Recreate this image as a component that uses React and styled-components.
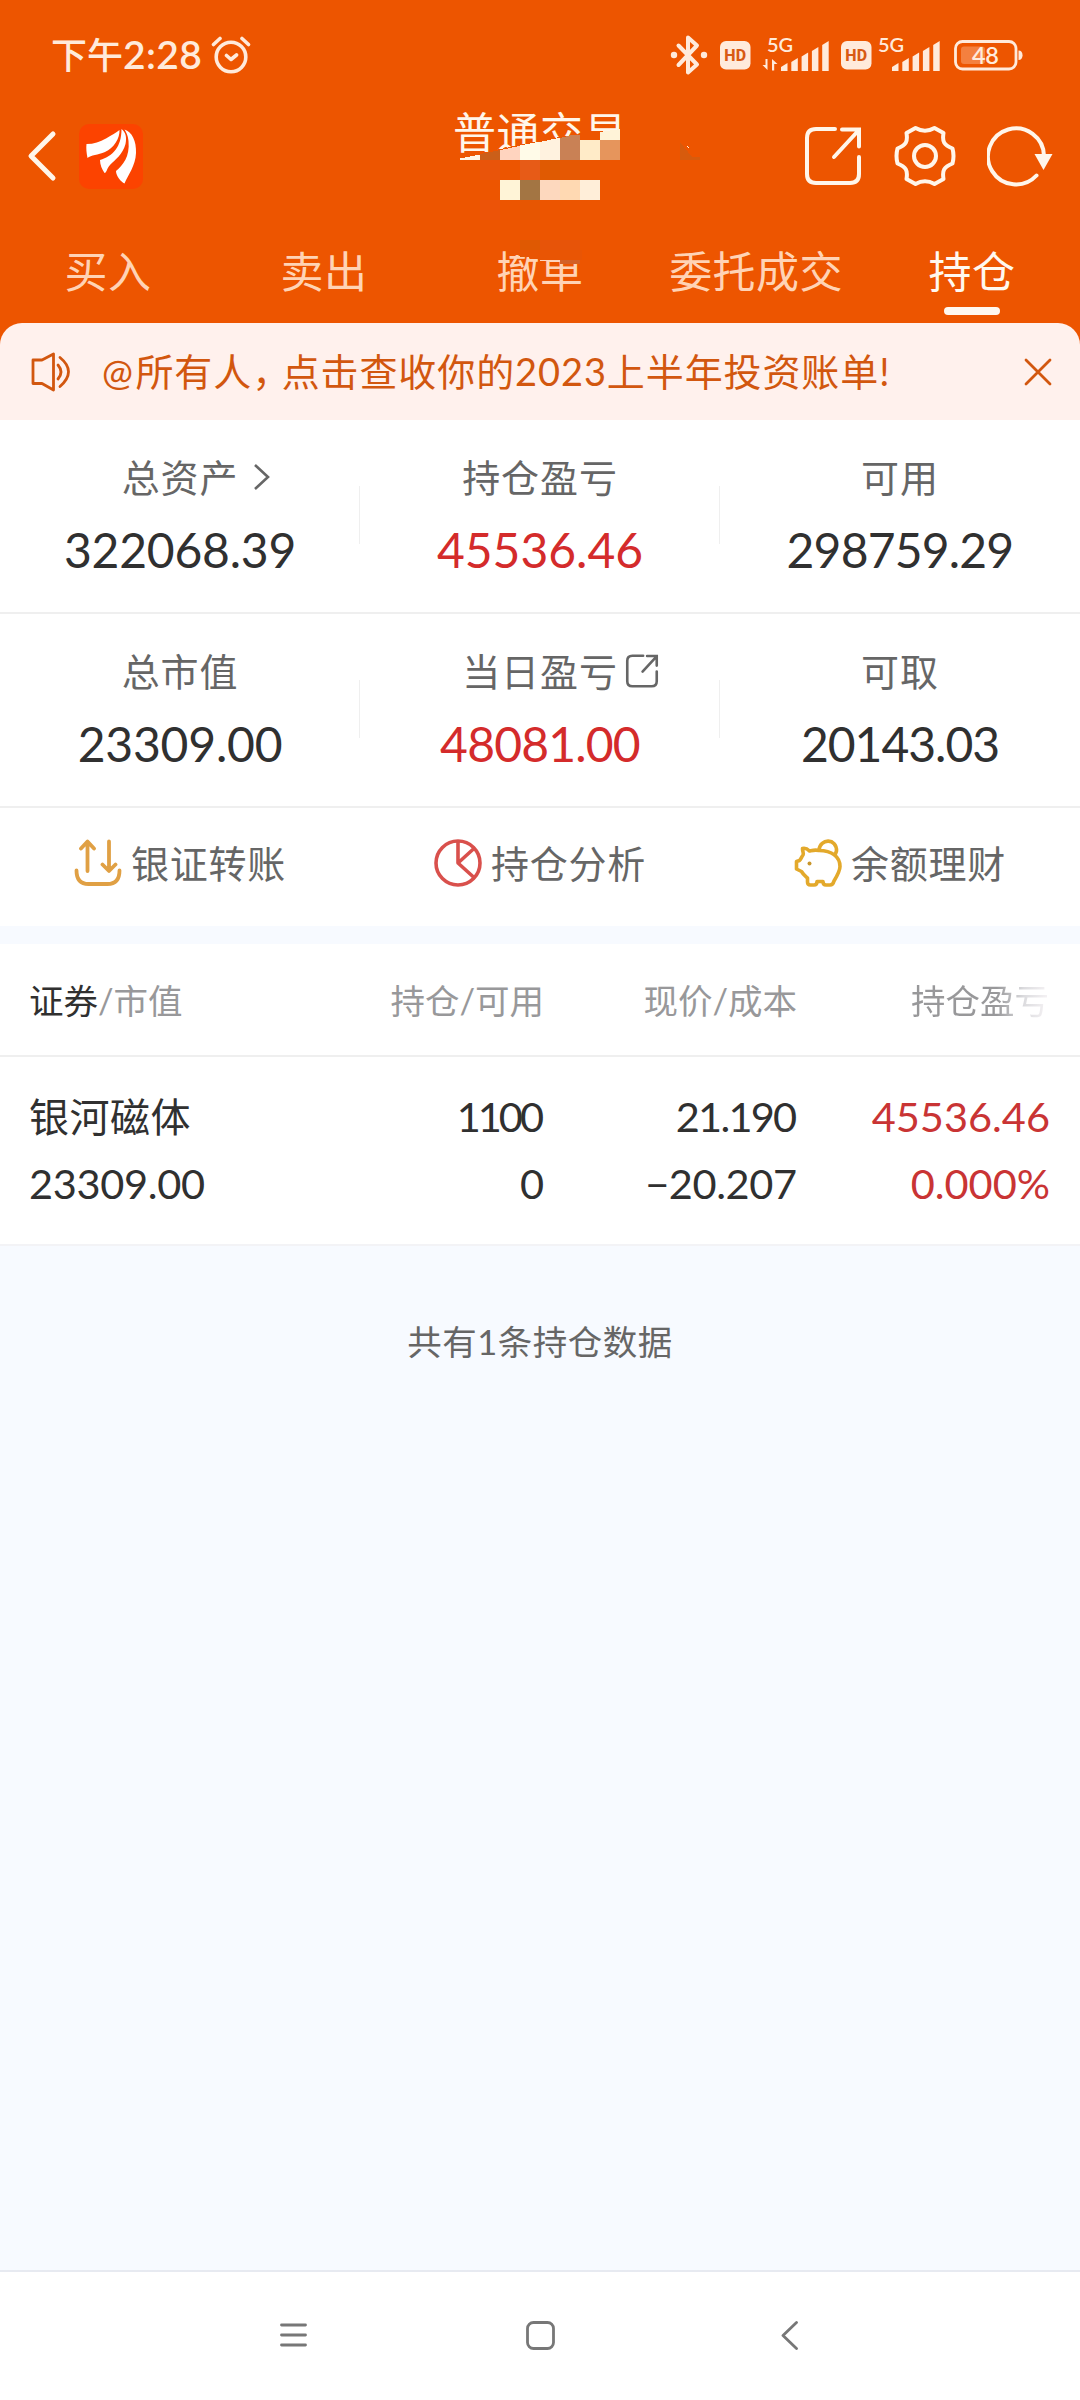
import React from 'react';
import styled, { createGlobalStyle } from 'styled-components';

const GlobalStyle = createGlobalStyle`
  * {
    box-sizing: border-box;
  }

  body {
    margin: 0;
    background: #f7faff;
    font-family: 'Lato', 'Noto Sans CJK SC', sans-serif;
  }

  svg {
    display: block;
    flex-shrink: 0;
  }
`;

const Page = styled.div`
  display: flex;
  flex-direction: column;
  width: 1080px;
  height: 2400px;
  overflow: hidden;
  background: #f7faff;
`;

const Header = styled.header`
  background: #ed5500;
`;

const StatusBar = styled.div`
  display: flex;
  align-items: center;
  justify-content: space-between;
  height: 110px;
  padding: 0 56px 1px 51px;
  color: #ffeadb;
`;

const Clock = styled.div`
  display: flex;
  align-items: center;
  font-size: 36px;
  font-weight: 500;
  line-height: 40px;
  gap: 9px;
`;

const ClockDigits = styled.span`
  font-size: 39px;
  font-weight: 600;
  letter-spacing: 0.4px;
`;

const TitleBar = styled.div`
  display: grid;
  grid-template-columns: 1fr auto 1fr;
  align-items: center;
  height: 92px;
  padding: 0 27px;
  color: #fff6ea;
`;

const TitleLeft = styled.div`
  display: flex;
  align-items: center;
  gap: 21px;
`;

const TitleRight = styled.div`
  display: flex;
  align-items: center;
  justify-content: flex-end;
  gap: 31px;
  padding-bottom: 1px;
`;

const Title = styled.h1`
  align-self: start;
  position: relative;
  margin: 0;
  font-size: 43px;
  font-weight: 400;
  line-height: 46px;
  letter-spacing: 0.5px;
  white-space: nowrap;
`;

const Mosaic = styled.svg`
  position: absolute;
  left: -13px;
  top: 14px;
`;

const Tabs = styled.nav`
  display: grid;
  grid-template-columns: repeat(5, 1fr);
  height: 121px;
`;

const Tab = styled.div`
  display: flex;
  flex-direction: column;
  align-items: center;
  padding-top: 45px;
  font-size: 43px;
  line-height: 50px;
  letter-spacing: 0.4px;
  white-space: nowrap;
  color: ${(props) => (props.$active ? '#fff8ef' : '#ffd3b5')};

  &::after {
    content: '';
    width: 56px;
    height: 8px;
    margin-top: 10px;
    border-radius: 4px;
    background: ${(props) => (props.$active ? '#fff8f0' : 'transparent')};
  }
`;

const Notice = styled.div`
  display: flex;
  align-items: center;
  height: 97px;
  padding: 0 28px 0 30px;
  border-radius: 22px 22px 0 0;
  background: #fff1ed;
  color: #d2570f;
`;

const NoticeText = styled.div`
  flex: 1;
  padding-left: 30px;
  font-size: 38px;
  line-height: 44px;
  letter-spacing: 0.9px;
  white-space: nowrap;
`;

const At = styled.span`
  font-size: 37px;
  letter-spacing: 2.5px;
`;

const Comma = styled.span`
  letter-spacing: -8.5px;
`;

const Summary = styled.section`
  background: #fff;
`;

const SummaryRow = styled.div`
  display: grid;
  grid-template-columns: repeat(3, 1fr);
  height: 194px;
  border-bottom: 2px solid #efefef;
`;

const Metric = styled.div`
  display: flex;
  flex-direction: column;
  align-items: center;
  padding-top: 35px;
  background: ${(props) =>
    props.$divided ? 'linear-gradient(#efefef, #efefef) right 66px / 1px 58px no-repeat' : 'none'};
`;

const MetricLabel = styled.div`
  position: relative;
  font-size: 38px;
  line-height: 44px;
  letter-spacing: 0.9px;
  color: #666;
`;

const LabelIcon = styled.span`
  position: absolute;
  left: 100%;
  top: ${(props) => props.$top}px;
  margin-left: ${(props) => props.$gap}px;
`;

const MetricValue = styled.div`
  margin-top: 24px;
  font-size: 48px;
  line-height: 54px;
  letter-spacing: ${(props) => props.$track || 0}px;
  color: ${(props) => (props.$up ? '#d42b2b' : '#303030')};
`;

const Actions = styled.div`
  display: grid;
  grid-template-columns: repeat(3, 1fr);
  height: 118px;
`;

const Action = styled.div`
  display: flex;
  align-items: center;
  justify-content: center;
  padding-bottom: 8px;
  font-size: 38px;
  line-height: 44px;
  letter-spacing: 0.8px;
  color: #666;
`;

const ActionLabel = styled.span`
  margin-left: 9px;
`;

const Holdings = styled.section`
  margin-top: 18px;
  background: #fff;
  border-bottom: 2px solid #f3f3f6;
`;

const HoldingsHead = styled.div`
  display: grid;
  grid-template-columns: 294px 221px 253px 1fr;
  align-items: center;
  height: 113px;
  padding: 0 31px 2px 29px;
  border-bottom: 2px solid #efefef;
  font-size: 34.5px;
  color: #98989a;
`;

const HeadCell = styled.div`
  text-align: ${(props) => (props.$left ? 'left' : 'right')};
  white-space: nowrap;
`;

const HeadStrong = styled.span`
  color: #303030;
`;

const FadedText = styled.span`
  background: linear-gradient(90deg, #98989a 62%, #dcdcdf 82%, #f6f3f5 100%);
  background-clip: text;
  color: transparent;
`;

const HoldingRow = styled.div`
  display: grid;
  grid-template-columns: 294px 221px 253px 1fr;
  height: 187px;
  padding: 26px 30px 0 29px;
  font-size: 41.5px;
  color: #303030;
`;

const Stack = styled.div`
  display: flex;
  flex-direction: column;
  align-items: ${(props) => (props.$left ? 'flex-start' : 'flex-end')};
  line-height: 67px;
  white-space: nowrap;
  color: ${(props) => (props.$up ? '#c93434' : 'inherit')};
`;

const StockName = styled.span`
  margin-bottom: -2px;
  font-size: 40px;
  line-height: 69px;
  letter-spacing: 0.5px;
`;

const Num = styled.span`
  letter-spacing: ${(props) => props.$track || 0}px;
  margin-right: ${(props) => -(props.$track || 0)}px;
`;

const Total = styled.div`
  flex: 1;
  padding-top: 71px;
  text-align: center;
  font-size: 34.5px;
  line-height: 50px;
  letter-spacing: 0.5px;
  color: #666;
`;

const NavBar = styled.footer`
  display: grid;
  grid-template-columns: 27px 29px 17px;
  align-items: center;
  justify-content: space-between;
  height: 130px;
  padding: 0 282px 2px 280px;
  background: #fff;
  border-top: 2px solid #e7eaf1;
`;

const HomeButton = styled.div`
  display: flex;
  margin: 0 4px 0 -4px;
`;

const AlarmIcon = () => (
  <svg width="40" height="40" viewBox="0 0 40 40" fill="none" stroke="currentColor" strokeWidth="3.6" strokeLinecap="round" strokeLinejoin="round">
    <circle cx="20" cy="22" r="14.8" />
    <path d="M15.5 20.5l4.5 4 5.5-4.5M2.5 9.5l6.5-6M31 3.5l6.5 6" />
  </svg>
);

// bluetooth, both SIM signals and the battery
const StatusIcons = () => (
  <svg width="354" height="58" viewBox="670 25 354 58" fill="currentColor">
    <path d="M678.500 44.500L697 63.500l-9 8V36.500l9 8L678.500 64" fill="none" stroke="currentColor" strokeWidth="4" strokeLinejoin="round" strokeLinecap="round" />
    <circle cx="674" cy="54" r="3.2" />
    <circle cx="704" cy="54" r="3.2" />
    {[720, 841].map((x) => (
      <g key={x}>
        <rect x={x} y="40" width="30.500" height="28.500" rx="6" />
        <text x={x + 15.2} y="60" fontFamily="Roboto, sans-serif" fontSize="16" fontWeight="800" textAnchor="middle" fill="#d85a14">HD</text>
      </g>
    ))}
    {[767, 878].map((x) => (
      <text key={x} x={x} y="51" fontFamily="Lato, sans-serif" fontSize="20" fontWeight="600" textLength="26">5G</text>
    ))}
    <path d="M767.500 58v11l-5-5h3v-6zM772 69.500v-11.500l5.500 5h-3.300v6.500z" />
    {[781, 892].map((x) =>
      [8, 13, 18.5, 24, 30].map((h, i) => (
        <path key={`${x}-${i}`} d={`M${x + i * 10.3} 70v-${h - 4}l6.500-4v${h}z`} strokeLinejoin="round" />
      ))
    )}
    <rect x="955.500" y="40.500" width="60.500" height="27.500" rx="7" fill="none" stroke="currentColor" strokeWidth="2.800" />
    <rect x="961" y="45.500" width="24" height="17.500" rx="3" fill="#f4803f" />
    <path d="M1018.500 49.500q4 0 4 4.800t-4 4.800z" />
    <text x="985.500" y="62.500" fontFamily="Lato, sans-serif" fontSize="23.500" fontWeight="600" textAnchor="middle" textLength="27">48</text>
  </svg>
);

const BackIcon = () => (
  <svg width="30" height="52" viewBox="0 0 30 52" fill="none" stroke="currentColor" strokeWidth="5" strokeLinecap="round" strokeLinejoin="round">
    <path d="M26 4L4 26l22 22" />
  </svg>
);

const Logo = () => (
  <svg width="66" height="67" viewBox="0 0 66 67">
    <rect x="1" y="1" width="64" height="65" rx="10" fill="#fc4300" />
    <g fill="#fff">
      <path d="M8.500 21C16 21 22 19 28 15.500C34 12 38 10 41.500 7C42 15 36 25 27 29C20 32 13 32 9.500 35C8.500 30 8 25 8.500 21Z" />
      <path d="M22 37C35 33 43.500 24 43.500 6C47.500 9 49 14 47.500 21C45 31 37 37 32 42C29 45 28.500 50 26.500 50C24 46 22 42 22 37Z" />
      <path d="M38 48C45 42 52 34 50.500 18C50 12 48 9 46.500 6.500C54 9 58.500 18 58 30C57.500 43 50 52 46.500 60.500C43 59 38 53 38 48Z" />
    </g>
  </svg>
);

const ShareIcon = ({ size, stroke }) => (
  <svg width={size} height={size} viewBox="0 0 60 60" fill="none" stroke="currentColor" strokeWidth={stroke} strokeLinecap="round">
    <path d="M32 3H13Q4 3 4 12v36q0 9 9 9h34q9 0 9-9V31" />
    <path d="M39 3.500h17v17M55 5L31 31" />
  </svg>
);

const GearIcon = () => (
  <svg width="62" height="62" viewBox="0 0 62 62" fill="none" stroke="currentColor" strokeWidth="4" strokeLinejoin="round">
    <path d="M21.500 3Q31 8.500 40.500 3L49.500 8C48 17 50 20 58.500 23.500Q60.500 31 58.500 38.500C50 42 48 45 49.500 54L40.500 59Q31 53.500 21.500 59L12.500 54C14 45 12 42 3.500 38.500Q1.500 31 3.500 23.500C12 20 14 17 12.500 8Z" />
    <circle cx="31" cy="31" r="11" />
  </svg>
);

const RefreshIcon = () => (
  <svg width="66" height="62" viewBox="0 0 66 62" fill="none" stroke="currentColor" strokeWidth="4" strokeLinecap="round">
    <path d="M49.500 50.500A28 28 0 1 1 57 31" />
    <path d="M47.500 29h18l-9 16z" fill="currentColor" stroke="none" />
  </svg>
);

// blurred-out account number, partly covering the title and the third tab
const MosaicOverlay = () => (
  <Mosaic width="270" height="145" viewBox="440 124 270 145" shapeRendering="crispEdges">
    <path d="M460 158L500 149L560 137V160H460Z M560 136H580L583 131H624V162H560Z M500 150h120v12h-120z" fill="#ed5500" />
    <path d="M460 158.500L480 154.500V160H460Z" fill="#fff6e5" />
    <path d="M480 154L500 150V160H480Z" fill="#cb5f19" />
    <path d="M500 150L520 146V160H500Z" fill="#ffd4bf" />
    <path d="M520 145.500L540 141.500V160H520Z" fill="#fffbe8" />
    <path d="M540 142L560 137.500V160H540Z" fill="#fff2df" />
    <path d="M560 138L570 135.500L580 135V160H560Z" fill="#c98155" />
    <rect x="580" y="140" width="20" height="20" fill="#ffebc8" />
    <rect x="600" y="140" width="20" height="20" fill="#e6955c" />
    <path d="M600 132L620 129V140H600Z" fill="#fff3d8" />
    <rect x="480" y="160" width="20" height="20" fill="#e9540a" />
    <rect x="520" y="160" width="20" height="20" fill="#e75b17" />
    <rect x="540" y="160" width="20" height="20" fill="#e05a02" />
    <rect x="560" y="160" width="20" height="20" fill="#e65803" />
    <rect x="500" y="180" width="20" height="20" fill="#fff4d7" />
    <rect x="520" y="180" width="20" height="20" fill="#a37543" />
    <rect x="540" y="180" width="20" height="20" fill="#fdd8be" />
    <rect x="560" y="180" width="20" height="20" fill="#ffd9b2" />
    <rect x="580" y="180" width="20" height="20" fill="#ffeed9" />
    <rect x="480" y="200" width="20" height="20" fill="#ec5308" />
    <rect x="520" y="200" width="20" height="20" fill="#e75602" />
    <rect x="520" y="240" width="20" height="17" fill="#df5902" />
    <rect x="540" y="240" width="40" height="20" fill="#e75409" />
    <path d="M508 253L540 260H582V250H508Z" fill="#e95504" />
    <path d="M540 260h20v2l-20-1z" fill="#ffd4bc" />
    <rect x="560" y="260" width="20" height="4" fill="#d36026" />
    <path d="M680 142L692 157H700V160H680Z" fill="#d75b0d" />
    <path d="M687 146l2 1v2z" fill="#fff3e0" />
  </Mosaic>
);

const SpeakerIcon = () => (
  <svg width="42" height="42" viewBox="0 0 42 42" fill="none" stroke="currentColor" strokeWidth="2.800" strokeLinejoin="round" strokeLinecap="round">
    <path d="M3 9h9L23.500 3v36L12 32.500H3z" />
    <path d="M28 14q6 7 0 14M30 6.500q17 14 0 29" />
  </svg>
);

const CloseIcon = () => (
  <svg width="28" height="28" viewBox="0 0 28 28" fill="none" stroke="currentColor" strokeWidth="2.800" strokeLinecap="round">
    <path d="M2 2l24 24M26 2L2 26" />
  </svg>
);

const ChevronIcon = () => (
  <svg width="18" height="28" viewBox="0 0 18 28" fill="none" stroke="currentColor" strokeWidth="2.600">
    <path d="M2 2l13 12L2 26" />
  </svg>
);

const TransferIcon = () => (
  <svg width="48" height="48" viewBox="0 0 48 48" fill="none" stroke="#e0a044" strokeWidth="3.800" strokeLinecap="round" strokeLinejoin="round">
    <path d="M13.500 32V3M7 9.500L13.500 2.500 20 9.500M35 2.500V31M28.500 25.500L35 32l6.500-6.500" />
    <path d="M2.500 31.500q0 13.500 12 13.500h19q12 0 12-13.500" />
  </svg>
);

const PieIcon = () => (
  <svg width="48" height="48" viewBox="0 0 48 48" fill="none" stroke="#d9504c" strokeWidth="3.600" strokeLinejoin="round">
    <circle cx="24" cy="24" r="22" />
    <path d="M24 2v22l16.500-15M24 24l16 14.500" />
  </svg>
);

const PiggyIcon = () => (
  <svg width="48" height="48" viewBox="0 0 48 48" fill="none" stroke="#e3a92b" strokeWidth="3.600" strokeLinejoin="round" strokeLinecap="round">
    <path d="M25 11.500C21 10.500 18 11.500 15.500 12C13 9.500 10.500 9 8.500 9.500C8.500 13 10 14 9 16C7.500 18 7 20 5.500 21.500L2.500 22.500V30L7.500 32.500C9.500 36 12 37.500 13.500 39V43Q13.500 46 16.500 46H20Q23 46 23 42.500H29Q29 46 32 46H36Q39 46 40 42C43 37 46 32 46 27.500C46 18 38 11.500 25 11.500Z" />
    <path d="M25 11C26 -1 43 -1 42.500 12L41 16" />
    <circle cx="15.500" cy="24.500" r="2" fill="#c9962c" stroke="none" />
  </svg>
);

const tabs = ['买入', '卖出', '撤单', '委托成交', '持仓'];

const metrics = [
  [
    { label: '总资产', value: '322068.39', track: -0.2, icon: 'chevron' },
    { label: '持仓盈亏', value: '45536.46', up: true },
    { label: '可用', value: '298759.29', track: -0.8 },
  ],
  [
    { label: '总市值', value: '23309.00', track: -0.2 },
    { label: '当日盈亏', value: '48081.00', up: true, track: -0.8, icon: 'share' },
    { label: '可取', value: '20143.03', track: -1 },
  ],
];

const actions = [
  { label: '银证转账', icon: <TransferIcon /> },
  { label: '持仓分析', icon: <PieIcon /> },
  { label: '余额理财', icon: <PiggyIcon /> },
];

function App() {
  return (
    <Page>
      <GlobalStyle />
      <Header>
        <StatusBar>
          <Clock>
            <span>下午<ClockDigits>2:28</ClockDigits></span>
            <AlarmIcon />
          </Clock>
          <StatusIcons />
        </StatusBar>

        <TitleBar>
          <TitleLeft>
            <BackIcon />
            <Logo />
          </TitleLeft>
          <Title>
            普通交易
            <MosaicOverlay />
          </Title>
          <TitleRight>
            <ShareIcon size={60} stroke={4} />
            <GearIcon />
            <RefreshIcon />
          </TitleRight>
        </TitleBar>

        <Tabs>
          {tabs.map((tab) => (
            <Tab key={tab} $active={tab === '持仓'}>{tab}</Tab>
          ))}
        </Tabs>

        <Notice>
          <SpeakerIcon />
          <NoticeText>
            <At>@</At>所有人<Comma>{'\uFF0C'}</Comma>点击查收你的2023上半年投资账单!
          </NoticeText>
          <CloseIcon />
        </Notice>
      </Header>

      <Summary>
        {metrics.map((row, i) => (
          <SummaryRow key={i}>
            {row.map((item, j) => (
              <Metric key={item.label} $divided={j < 2}>
                <MetricLabel>
                  {item.label}
                  {item.icon === 'chevron' && (
                    <LabelIcon $top={8} $gap={15}><ChevronIcon /></LabelIcon>
                  )}
                  {item.icon === 'share' && (
                    <LabelIcon $top={5} $gap={7}><ShareIcon size={34} stroke={4.6} /></LabelIcon>
                  )}
                </MetricLabel>
                <MetricValue $up={item.up} $track={item.track}>{item.value}</MetricValue>
              </Metric>
            ))}
          </SummaryRow>
        ))}
        <Actions>
          {actions.map((item) => (
            <Action key={item.label}>
              {item.icon}
              <ActionLabel>{item.label}</ActionLabel>
            </Action>
          ))}
        </Actions>
      </Summary>

      <Holdings>
        <HoldingsHead>
          <HeadCell $left><HeadStrong>证券</HeadStrong>/市值</HeadCell>
          <HeadCell>持仓/可用</HeadCell>
          <HeadCell>现价/成本</HeadCell>
          <HeadCell><FadedText>持仓盈亏</FadedText></HeadCell>
        </HoldingsHead>
        <HoldingRow>
          <Stack $left>
            <StockName>银河磁体</StockName>
            <Num $track={-0.3}>23309.00</Num>
          </Stack>
          <Stack>
            <Num $track={-3}>1100</Num>
            <Num>0</Num>
          </Stack>
          <Stack>
            <Num $track={-1.8}>21.190</Num>
            <Num $track={-0.4}>−20.207</Num>
          </Stack>
          <Stack $up>
            <Num>45536.46</Num>
            <Num>0.000%</Num>
          </Stack>
        </HoldingRow>
      </Holdings>

      <Total>共有1条持仓数据</Total>

      <NavBar>
        <svg width="27" height="28" viewBox="0 0 27 28" stroke="#777" strokeWidth="2.800" strokeLinecap="round">
          <path d="M1.500 4h24M1.500 14h24M1.500 24h24" />
        </svg>
        <HomeButton>
          <svg width="29" height="29" viewBox="0 0 29 29" fill="none" stroke="#777" strokeWidth="2.800">
            <rect x="1.500" y="1.500" width="26" height="26" rx="6" />
          </svg>
        </HomeButton>
        <svg width="17" height="29" viewBox="0 0 17 29" fill="none" stroke="#777" strokeWidth="2.800" strokeLinecap="round" strokeLinejoin="round">
          <path d="M15.500 1.500L2 14.500l13.500 13" />
        </svg>
      </NavBar>
    </Page>
  );
}

export default App;
